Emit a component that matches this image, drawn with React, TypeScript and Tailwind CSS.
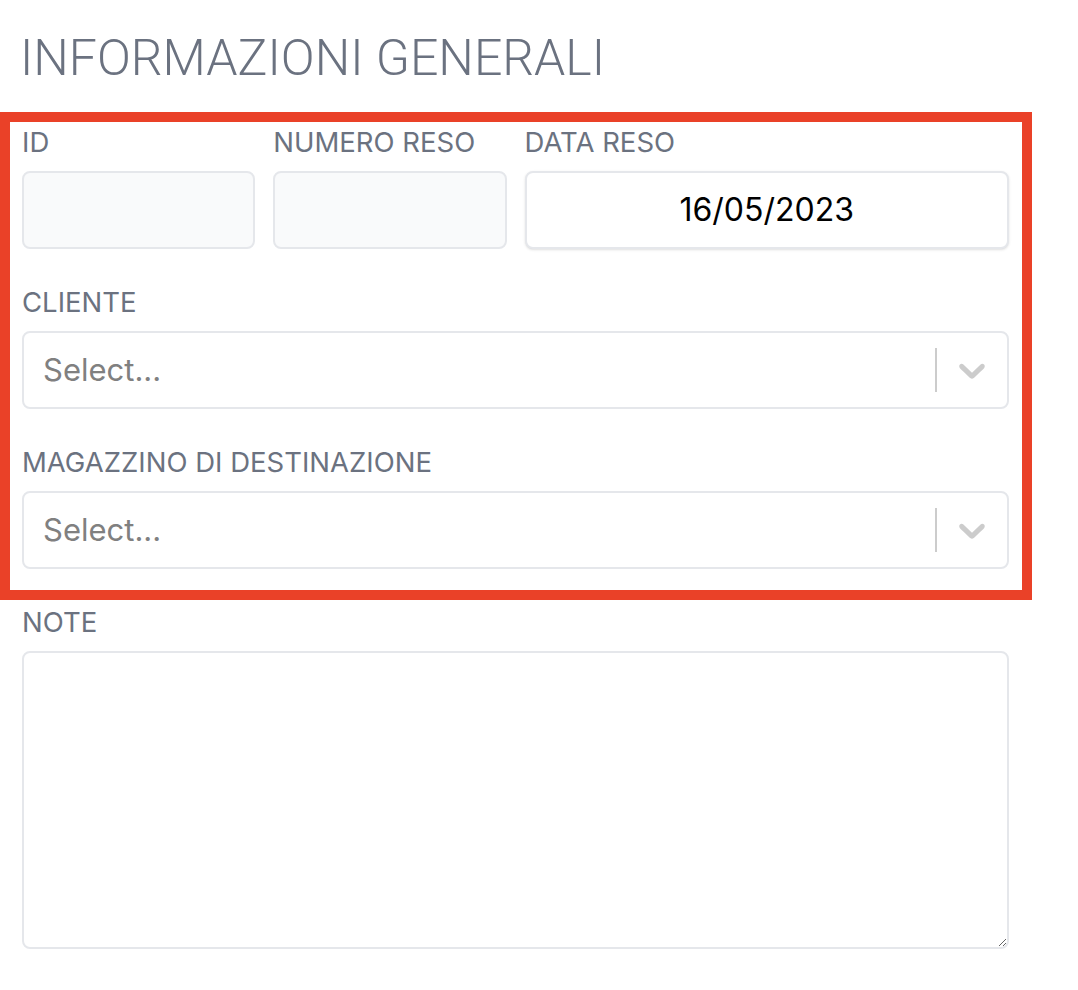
import React from 'react';

const labelCls = 'block text-[27.5px] leading-[36px] text-[#6b7280] mb-[11px]';

function Chevron() {
  return (
    <svg width="44" height="44" viewBox="0 0 20 20" fill="#cccccc" aria-hidden="true">
      <path d="M4.516 7.548c0.436-0.446 1.043-0.481 1.576 0l3.908 3.747 3.908-3.747c0.533-0.481 1.141-0.446 1.574 0 0.436 0.445 0.408 1.197 0 1.615-0.406 0.418-4.695 4.502-4.695 4.502-0.217 0.223-0.502 0.335-0.787 0.335s-0.57-0.112-0.789-0.335c0 0-4.287-4.084-4.695-4.502s-0.436-1.17 0-1.615z" />
    </svg>
  );
}

function FakeSelect() {
  return (
    <div className="flex items-center h-[78px] bg-white border-2 border-[#e5e7eb] rounded-[8px]">
      <div className="flex-1 pl-[19px] text-[31px] text-[#808080]">Select...</div>
      <div className="flex items-center self-stretch">
        <span className="w-[2px] h-[44px] bg-[#cccccc]" />
        <span className="px-[13px] flex items-center">
          <Chevron />
        </span>
      </div>
    </div>
  );
}

export default function App() {
  return (
    <div className="w-[1032px] bg-white pt-[29px] pb-[40px] font-['Inter',sans-serif]">
      <h2 className="pl-[20px] font-['Roboto',sans-serif] text-[50px] leading-[59px] font-light text-[#6b7280] mb-[24px]">
        INFORMAZIONI GENERALI
      </h2>

      <div className="border-[10px] border-[#ea4128] pl-[12px] pr-[13px] pt-[2px] pb-[21px]">
        <div className="grid grid-cols-4 gap-x-[18px]">
          <div>
            <label className={labelCls}>ID</label>
            <input
              disabled
              className="w-full h-[78px] bg-[#f9fafb] border-2 border-[#e5e7eb] rounded-[8px]"
            />
          </div>
          <div>
            <label className={labelCls}>NUMERO RESO</label>
            <input
              disabled
              className="w-full h-[78px] bg-[#f9fafb] border-2 border-[#e5e7eb] rounded-[8px]"
            />
          </div>
          <div className="col-span-2">
            <label className={labelCls}>DATA RESO</label>
            <div className="flex items-center justify-center h-[78px] bg-white border-2 border-[#e5e7eb] rounded-[8px] shadow-sm text-[32px] text-black">
              16/05/2023
            </div>
          </div>
        </div>

        <div className="mt-[35px]">
          <label className={labelCls}>CLIENTE</label>
          <FakeSelect />
        </div>

        <div className="mt-[35px]">
          <label className={labelCls}>MAGAZZINO DI DESTINAZIONE</label>
          <FakeSelect />
        </div>
      </div>

      <div className="pl-[22px] pr-[23px] pt-[4px]">
        <label className={labelCls}>NOTE</label>
        <textarea className="block w-full h-[298px] bg-white border-2 border-[#e5e7eb] rounded-[8px]" />
      </div>
    </div>
  );
}
